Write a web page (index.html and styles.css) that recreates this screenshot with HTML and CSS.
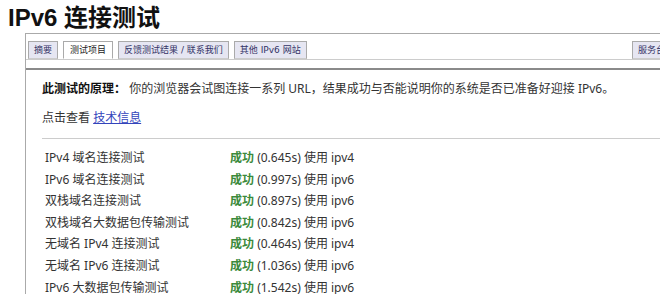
FILE: index.html
```html
<!DOCTYPE html>
<html>
<head>
  <title>IPv6 连接测试</title>
  <link rel="stylesheet" href="styles.css">
</head>
<body>
  <h1>IPv6 连接测试</h1>

  <div class="box">
    <div class="tabs">
      <span class="tab">摘要</span>
      <span class="tab active">测试项目</span>
      <span class="tab">反馈测试结果 / 联系我们</span>
      <span class="tab">其他 IPv6 网站</span>
      <span class="spacer"></span>
      <span class="tab last">服务台</span>
    </div>

    <div class="content">
      <p class="intro"><strong>此测试的原理：</strong> 你的浏览器会试图连接一系列 URL，结果成功与否能说明你的系统是否已准备好迎接 IPv6。</p>
      <p class="more">点击查看 <a href="#">技术信息</a></p>
      <hr>
      <div class="results">
        <div class="name">IPv4 域名连接测试</div>
        <div class="res"><b>成功</b> (0.645s) 使用 ipv4</div>
        <div class="name">IPv6 域名连接测试</div>
        <div class="res"><b>成功</b> (0.997s) 使用 ipv6</div>
        <div class="name">双栈域名连接测试</div>
        <div class="res"><b>成功</b> (0.897s) 使用 ipv6</div>
        <div class="name">双栈域名大数据包传输测试</div>
        <div class="res"><b>成功</b> (0.842s) 使用 ipv6</div>
        <div class="name">无域名 IPv4 连接测试</div>
        <div class="res"><b>成功</b> (0.464s) 使用 ipv4</div>
        <div class="name">无域名 IPv6 连接测试</div>
        <div class="res"><b>成功</b> (1.036s) 使用 ipv6</div>
        <div class="name">IPv6 大数据包传输测试</div>
        <div class="res"><b>成功</b> (1.542s) 使用 ipv6</div>
      </div>
    </div>
  </div>
</body>
</html>
```

FILE: styles.css
```css
html, body {
  margin: 0;
  overflow: hidden;
  background: #fff;
}
body {
  padding: 0 0 0 8px;
  font-family: "Noto Sans", "Noto Sans CJK SC", sans-serif;
  font-size: 12px;
  color: #333;
}
h1 {
  margin: 4px 0 0;
  font-family: "Liberation Sans", "Noto Sans CJK SC", sans-serif;
  font-size: 24px;
  line-height: 28px;
  font-weight: bold;
  color: #111;
}
.box {
  margin: 1px 0 0 17px;
  width: 700px;
  border-top: 1px solid #aaa;
  border-left: 1px solid #aaa;
  height: 300px;
}
.tabs {
  display: flex;
  gap: 5px;
  padding: 7px 0 0 2px;
  height: 18px;
  border-bottom: 1px solid #ccc;
}
.tab {
  box-sizing: border-box;
  height: 18px;
  line-height: 16px;
  padding: 0 5px;
  border: 1px solid #aaa;
  border-bottom-color: #ccc;
  background: #e6e6f2;
  color: #336;
  font-family: "DejaVu Sans", "Noto Sans CJK SC", sans-serif;
  font-size: 9px;
}
.tab.active {
  background: #fff;
  color: #222;
  padding: 0 6px;
  border-bottom-color: #fff;
}
.spacer {
  flex: 1;
}
.tab.last {
  margin-right: 55px;
}
.content {
  margin-top: 8px;
  border-top: 2px solid #8a8a8a;
  padding: 9px 0 0 16px;
}
.intro {
  margin: 0;
  line-height: 20px;
}
.intro strong {
  color: #111;
}
.more {
  margin: 9px 0 0;
  line-height: 20px;
}
.more a {
  color: #3344bb;
}
hr {
  margin: 10px 0 0;
  border: none;
  border-top: 1px solid #ccc;
}
.results {
  display: grid;
  grid-template-columns: 185px auto;
  padding: 8px 0 0 3px;
  line-height: 21.6px;
}
.res b {
  color: #3b8a3b;
}
```
